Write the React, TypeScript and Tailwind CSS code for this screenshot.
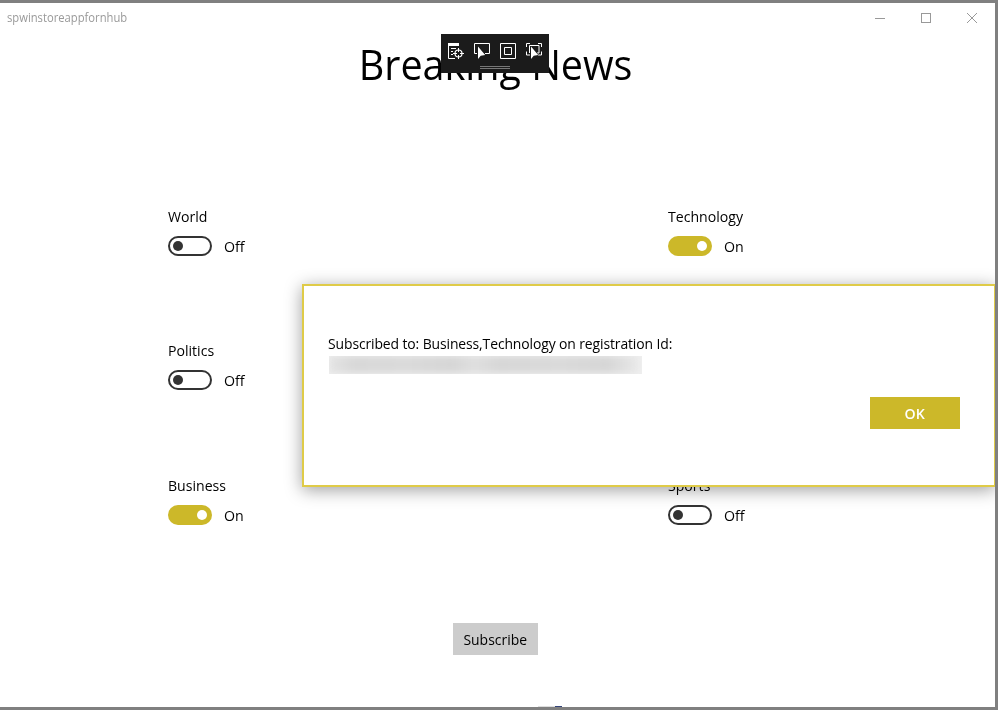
import React from "react";

type Topic = { name: string; on: boolean };

const topics: Topic[] = [
  { name: "World", on: false },
  { name: "Technology", on: true },
  { name: "Politics", on: false },
  { name: "", on: false },
  { name: "Business", on: true },
  { name: "Sports", on: false },
];

function Toggle({ on }: { on: boolean }) {
  return on ? (
    <span className="flex h-5 w-11 items-center justify-end rounded-full bg-[#ccb829] pr-[5px]">
      <span className="size-[10px] rounded-full bg-white" />
    </span>
  ) : (
    <span className="flex h-5 w-11 items-center rounded-full border-2 border-[#333] pl-[3px]">
      <span className="size-[10px] rounded-full bg-[#333]" />
    </span>
  );
}

function TopicCell({ topic }: { topic: Topic }) {
  if (!topic.name) return <div />;
  return (
    <div className="text-[15px] leading-[18px] text-black">
      <div className="origin-left scale-x-[0.94]">{topic.name}</div>
      <div className="mt-[11px] flex h-5 items-center gap-3">
        <Toggle on={topic.on} />
        <span className="origin-left scale-x-[0.945]">{topic.on ? "On" : "Off"}</span>
      </div>
    </div>
  );
}

function TitleBar() {
  return (
    <header className="flex h-[30px] items-center justify-between pl-[7px] pr-[17px] text-[#999]">
      <span className="origin-left scale-x-[0.935] text-[12px] leading-4">spwinstoreappfornhub</span>
      <svg width="103" height="12" viewBox="0 0 103 12" fill="none" stroke="#999" shapeRendering="crispEdges">
        <path d="M0 6.5h10" />
        <path d="M46.5 1.5h9v9h-9z" />
        <path d="M92 1l10 10M102 1L92 11" shapeRendering="auto" />
      </svg>
    </header>
  );
}

function DebugToolbar() {
  return (
    <div className="absolute left-[441px] top-[31px] h-[39px] w-[108px] bg-[#1b1b1b]">
      <svg width="108" height="39" viewBox="0 0 108 39" fill="none" stroke="#fff">
        <path d="M7.5 12v12.5H14" />
        <path d="M7 9h11v3H7z" fill="#fff" stroke="none" />
        <path d="M10 14.5h5M10 17.5h2M10 20.5h2" />
        <circle cx="17.500" cy="19.5" r="3.5" strokeWidth="1.2" />
        <path d="M17.500 14v4M17.500 21v4M12 19.500h4M19 19.500h4" />
        <path d="M36 19.500h-2.500v-10h15v10H44" />
        <path d="M37 12.500v12.500l2.700-3.300 4.500-.7z" fill="#fff" stroke="none" />
        <path d="M59.500 9.500h15v15h-15zM63.500 13.500h7v7h-7z" />
        <path d="M85.500 13V9.500H89M97 9.500h3.500V13M100.500 17.500v3.500H97M85.500 17.500v3.500H89M88.500 19v-7.500h9.500v7.500H96" />
        <path d="M90 12.500v12.500l2.700-3.300 4.500-.7z" fill="#fff" stroke="#1b1b1b" strokeWidth="1" paintOrder="stroke" />
        <path d="M39 32.500h30M39 34.500h30" stroke="#777" />
      </svg>
    </div>
  );
}

function Dialog() {
  return (
    <section
      role="dialog"
      className="absolute left-[302px] top-[281px] flex h-[203px] w-[693px] flex-col border-2 border-r border-[#dfcb48] bg-white pl-6 pr-[34px] pt-[48px] shadow-[0_3px_16px_0_rgba(0,0,0,0.38)]"
    >
      <p className="origin-left scale-x-[0.93] whitespace-nowrap text-[15px] leading-[18px] tracking-[-0.13px] text-black">
        Subscribed to: Business,Technology on registration Id:
      </p>
      <div className="ml-px mt-[4px] h-[18px] w-[313px] overflow-hidden bg-[#efefef]">
        <div className="h-[17px] w-[309px] bg-[linear-gradient(90deg,#e4e4e4,#d8d8d8_8%,#dadada_25%,#d6d6d6_40%,#dfdfdf_47%,#d7d7d7_55%,#dadada_75%,#d6d6d6_90%,#e8e8e8)] blur-[3px]" />
      </div>
      <button className="mt-[23px] h-8 w-[90px] self-end bg-[#ccb829] text-[15px] font-semibold leading-5 text-white">
        <span className="inline-block scale-x-[0.945] pb-px">OK</span>
      </button>
    </section>
  );
}

export default function App() {
  return (
    <div className="h-[710px] w-[998px] overflow-hidden border-y-[3px] border-r-[3px] border-[#808080] bg-white font-['Open_Sans','Noto_Sans',sans-serif]">
      <div className="relative flex h-[704px] flex-col overflow-hidden">
        <TitleBar />
        <h1 className="h-[60px] scale-x-[0.94] pr-[4px] text-center text-[42px] leading-[62px] text-black">
          Breaking News
        </h1>
        <main className="mt-[114px] grid grid-cols-[500px_1fr] grid-rows-[134px_135px_134px] pl-[168px]">
          {topics.map((topic, i) => (
            <TopicCell key={i} topic={topic} />
          ))}
        </main>
        <button className="ml-[453px] mt-[13px] h-8 w-[85px] bg-[#ccc] text-[15px] leading-5 text-black">
          <span className="-ml-px inline-block scale-x-[0.93] whitespace-nowrap pb-px">Subscribe</span>
        </button>
        <div className="ml-[538px] mt-auto flex h-px">
          <span className="w-[17px] bg-[#ddd]" />
          <span className="w-[7px] bg-[#35457a]" />
        </div>
        <Dialog />
        <DebugToolbar />
      </div>
    </div>
  );
}
